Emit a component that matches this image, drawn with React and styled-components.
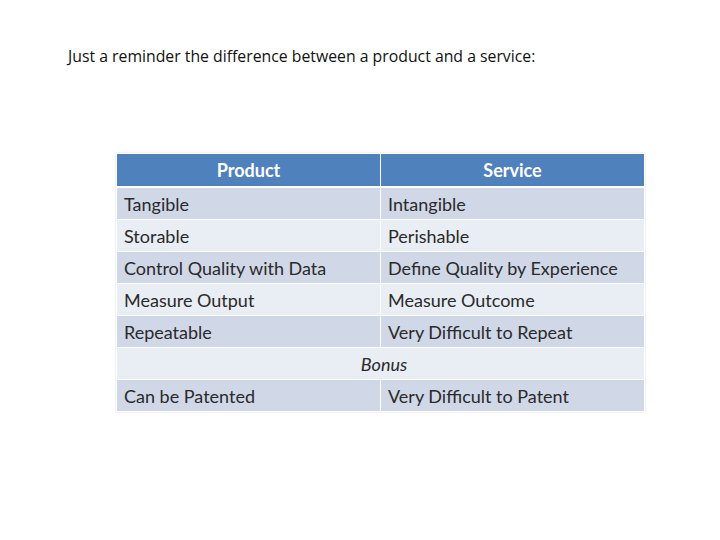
import React from 'react';
import styled, { createGlobalStyle } from 'styled-components';

const GlobalStyle = createGlobalStyle`
  html, body { margin: 0; padding: 0; background: #ffffff; }
  body { font-family: "Lato", "Open Sans", sans-serif; color: #000; }
`;

const Slide = styled.div`
  width: 720px;
  height: 540px;
  box-sizing: border-box;
  padding: 46px 0 0 68px;
  display: flex;
  flex-direction: column;
`;

const Intro = styled.p`
  margin: 0;
  font-family: "Open Sans", sans-serif;
  font-size: 15.8px;
  line-height: 21px;
  color: #111;
`;

const Table = styled.table`
  margin: 86px 0 0 48px;
  width: 529px;
  border-collapse: collapse;
  table-layout: fixed;
  box-shadow: 0 0 2px rgba(0, 0, 0, 0.15);
`;

const HeadCell = styled.th`
  background: #4f81bd;
  color: #fff;
  font-weight: 700;
  font-size: 18px;
  height: 32px;
  padding: 0;
  text-align: center;
  border: 1px solid #fff;
  border-bottom-width: 2px;
`;

const Cell = styled.td`
  background: ${p => (p.$shade ? '#d0d8e8' : '#e9edf4')};
  color: #2a2a2a;
  font-size: 18px;
  height: 31px;
  padding: 0 0 0 7px;
  text-align: ${p => (p.$center ? 'center' : 'left')};
  font-style: ${p => (p.$italic ? 'italic' : 'normal')};
  border: 1px solid #fff;
  white-space: nowrap;
`;

const rows = [
  ['Tangible', 'Intangible'],
  ['Storable', 'Perishable'],
  ['Control Quality with Data', 'Define Quality by Experience'],
  ['Measure Output', 'Measure Outcome'],
  ['Repeatable', 'Very Difficult to Repeat'],
];

export default function App() {
  return (
    <Slide>
      <GlobalStyle />
      <Intro>Just a reminder the difference between a product and a service:</Intro>
      <Table>
        <thead>
          <tr>
            <HeadCell>Product</HeadCell>
            <HeadCell>Service</HeadCell>
          </tr>
        </thead>
        <tbody>
          {rows.map((r, i) => (
            <tr key={r[0]}>
              <Cell $shade={i % 2 === 0}>{r[0]}</Cell>
              <Cell $shade={i % 2 === 0}>{r[1]}</Cell>
            </tr>
          ))}
          <tr>
            <Cell colSpan={2} $center $italic>Bonus</Cell>
          </tr>
          <tr>
            <Cell $shade>Can be Patented</Cell>
            <Cell $shade>Very Difficult to Patent</Cell>
          </tr>
        </tbody>
      </Table>
    </Slide>
  );
}
